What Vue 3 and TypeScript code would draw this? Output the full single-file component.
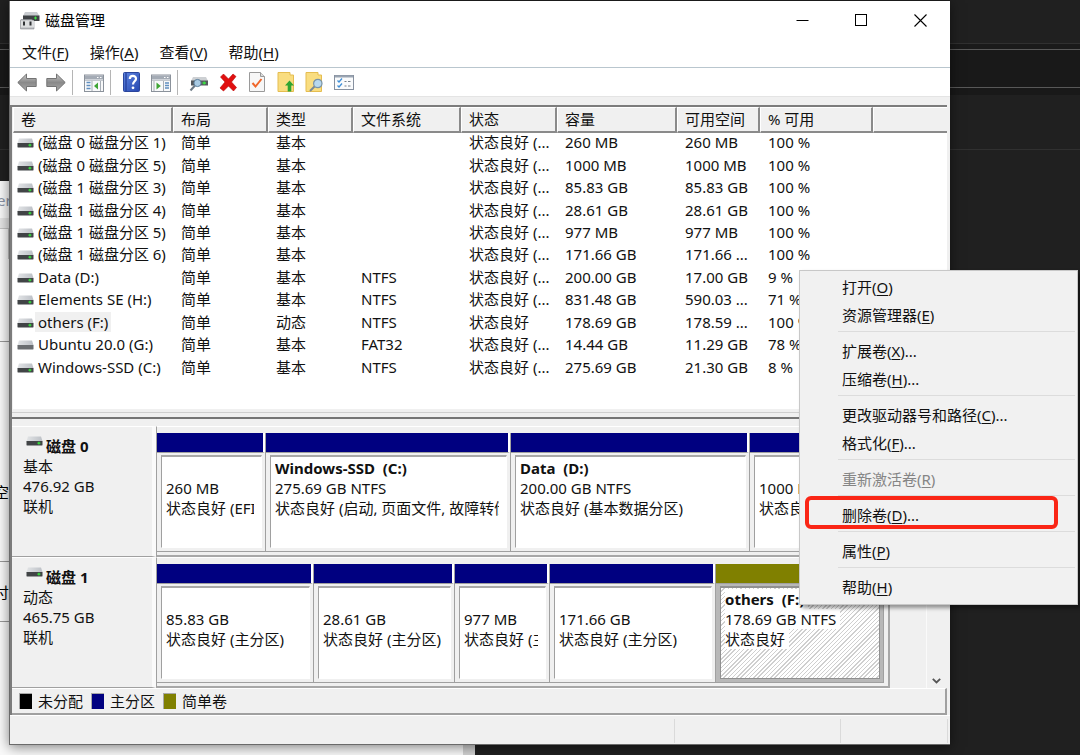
<script setup lang="ts">
interface Volume {
  name: string
  type: string
  fs: string
  status: string
  size: string
  free: string
  pct: string
  selected?: boolean
  plain?: boolean
}

interface Partition {
  title?: string
  size: string
  status: string
  weight: number
  simple?: boolean
}

interface Disk {
  name: string
  kind: string
  size: string
  partitions: Partition[]
}

interface MenuEntry {
  label?: string
  key?: string
  tail?: string
  disabled?: boolean
  marked?: boolean
}

const menus = [
  { label: '文件', key: 'F' },
  { label: '操作', key: 'A' },
  { label: '查看', key: 'V' },
  { label: '帮助', key: 'H' },
]

const columns = ['卷', '布局', '类型', '文件系统', '状态', '容量', '可用空间', '% 可用', '']

const good = '状态良好 (...'

const volumes: Volume[] = [
  { name: '(磁盘 0 磁盘分区 1)', type: '基本', fs: '', status: good, size: '260 MB', free: '260 MB', pct: '100 %' },
  { name: '(磁盘 0 磁盘分区 5)', type: '基本', fs: '', status: good, size: '1000 MB', free: '1000 MB', pct: '100 %' },
  { name: '(磁盘 1 磁盘分区 3)', type: '基本', fs: '', status: good, size: '85.83 GB', free: '85.83 GB', pct: '100 %' },
  { name: '(磁盘 1 磁盘分区 4)', type: '基本', fs: '', status: good, size: '28.61 GB', free: '28.61 GB', pct: '100 %' },
  { name: '(磁盘 1 磁盘分区 5)', type: '基本', fs: '', status: good, size: '977 MB', free: '977 MB', pct: '100 %' },
  { name: '(磁盘 1 磁盘分区 6)', type: '基本', fs: '', status: good, size: '171.66 GB', free: '171.66 ...', pct: '100 %' },
  { name: 'Data (D:)', type: '基本', fs: 'NTFS', status: good, size: '200.00 GB', free: '17.00 GB', pct: '9 %' },
  { name: 'Elements SE (H:)', type: '基本', fs: 'NTFS', status: good, size: '831.48 GB', free: '590.03 ...', pct: '71 %' },
  { name: 'others (F:)', type: '动态', fs: 'NTFS', status: '状态良好', size: '178.69 GB', free: '178.59 ...', pct: '100 %', selected: true },
  { name: 'Ubuntu 20.0 (G:)', type: '基本', fs: 'FAT32', status: good, size: '14.44 GB', free: '11.29 GB', pct: '78 %', plain: true },
  { name: 'Windows-SSD (C:)', type: '基本', fs: 'NTFS', status: good, size: '275.69 GB', free: '21.30 GB', pct: '8 %' },
]

const disks: Disk[] = [
  {
    name: '磁盘 0',
    kind: '基本',
    size: '476.92 GB',
    partitions: [
      { size: '260 MB', status: '状态良好 (EFI', weight: 109 },
      { title: 'Windows-SSD\u00a0 (C:)', size: '275.69 GB NTFS', status: '状态良好 (启动, 页面文件, 故障转储', weight: 245 },
      { title: 'Data\u00a0 (D:)', size: '200.00 GB NTFS', status: '状态良好 (基本数据分区)', weight: 239 },
      { size: '1000 MB', status: '状态良好', weight: 134 },
    ],
  },
  {
    name: '磁盘 1',
    kind: '动态',
    size: '465.75 GB',
    partitions: [
      { size: '85.83 GB', status: '状态良好 (主分区)', weight: 157 },
      { size: '28.61 GB', status: '状态良好 (主分区)', weight: 141 },
      { size: '977 MB', status: '状态良好 (主', weight: 95 },
      { size: '171.66 GB', status: '状态良好 (主分区)', weight: 166 },
      { title: 'others\u00a0 (F:)', size: '178.69 GB NTFS', status: '状态良好', weight: 168, simple: true },
    ],
  },
]

const tracks = (disk: Disk) => disk.partitions.map((p) => `minmax(0, ${p.weight}fr)`).join(' ')

const contextMenu: MenuEntry[] = [
  { label: '打开', key: 'O' },
  { label: '资源管理器', key: 'E' },
  {},
  { label: '扩展卷', key: 'X', tail: '...' },
  { label: '压缩卷', key: 'H', tail: '...' },
  {},
  { label: '更改驱动器号和路径', key: 'C', tail: '...' },
  { label: '格式化', key: 'F', tail: '...' },
  {},
  { label: '重新激活卷', key: 'R', disabled: true },
  {},
  { label: '删除卷', key: 'D', tail: '...', marked: true },
  {},
  { label: '属性', key: 'P' },
  {},
  { label: '帮助', key: 'H' },
]

const legend = [
  { label: '未分配', tone: 'black' },
  { label: '主分区', tone: 'navy' },
  { label: '简单卷', tone: 'olive' },
]
</script>

<template>
  <div class="desktop">
    <svg class="defs" width="0" height="0" aria-hidden="true">
      <defs>
        <linearGradient id="lid" x1="0" y1="0" x2="1" y2="0">
          <stop offset="0" stop-color="#e2e4e6" />
          <stop offset="1" stop-color="#bcc0c6" />
        </linearGradient>
        <linearGradient id="arrow" x1="0" y1="0" x2="0" y2="1">
          <stop offset="0" stop-color="#c8c8c8" />
          <stop offset="0.5" stop-color="#8a8a8a" />
          <stop offset="1" stop-color="#a8a8a8" />
        </linearGradient>
        <linearGradient id="book" x1="0" y1="0" x2="1" y2="1">
          <stop offset="0" stop-color="#5f86e0" />
          <stop offset="1" stop-color="#2546b0" />
        </linearGradient>
        <symbol id="drive" viewBox="0 0 17 10">
          <path d="M2 0.5H15L16.5 5.2H0.5Z" fill="url(#lid)" />
          <rect x="0.5" y="5" width="16" height="4.4" rx="0.4" fill="#414446" />
          <path d="M11.4 7.2H14.4M12.9 5.8V8.6" stroke="#35e13c" stroke-width="1.2" />
        </symbol>
        <symbol id="drive-plain" viewBox="0 0 17 10">
          <path d="M2 0.5H15L16.5 5.2H0.5Z" fill="url(#lid)" />
          <rect x="0.5" y="5" width="16" height="4.4" rx="0.4" fill="#6a6d70" />
        </symbol>
      </defs>
    </svg>

    <div class="backdrop" aria-hidden="true">
      <div class="dark-band"></div>
      <div class="sheet">
        <span class="scrap ers">ers</span>
        <span class="sheet-field"></span>
        <span class="sheet-line l1"></span>
        <span class="scrap kong">空</span>
        <span class="sheet-line l2"></span>
        <span class="scrap fu">付</span>
        <span class="sheet-line l3"></span>
      </div>
    </div>

    <main class="window">
      <header class="titlebar">
        <svg class="app-icon" viewBox="0 0 20 19" width="20" height="19" aria-hidden="true">
          <path d="M5 1H17L19.5 5H3Z" fill="#c9ccd0" />
          <rect x="3" y="4.5" width="16.5" height="5.5" fill="#3f4245" />
          <path d="M14 7H17M15.5 5.6V8.4" stroke="#3fe046" stroke-width="1.2" />
          <path d="M1 8.5H11.5L14 10V18H0.5V9Z" fill="#b4b6ba" stroke="#8c8f93" stroke-width="0.6" />
          <rect x="1" y="9.5" width="13" height="7" fill="#dcdee0" />
          <path d="M4 10.5V14.5M10.5 10.5V14.5" stroke="#303336" stroke-width="2" />
        </svg>
        <h1>磁盘管理</h1>
        <div class="controls">
          <button type="button" aria-label="最小化">
            <svg viewBox="0 0 13 13" width="13" height="13"><path d="M0.5 6.5H12.5" stroke="#000" /></svg>
          </button>
          <button type="button" aria-label="最大化">
            <svg viewBox="0 0 13 13" width="13" height="13"><rect x="0.5" y="0.5" width="11" height="11" fill="none" stroke="#000" /></svg>
          </button>
          <button type="button" aria-label="关闭">
            <svg viewBox="0 0 13 13" width="13" height="13"><path d="M0.5 0.5L12.5 12.5M12.5 0.5L0.5 12.5" stroke="#000" stroke-width="1.1" /></svg>
          </button>
        </div>
      </header>

      <nav class="menubar">
        <button v-for="m in menus" :key="m.key" type="button">{{ m.label }}(<u>{{ m.key }}</u>)</button>
      </nav>

      <div class="toolbar">
        <button type="button" aria-label="后退">
          <svg viewBox="0 0 20 19" width="20" height="19"><path d="M0.8 9.5L9.5 1V5.5H19.2V13.5H9.5V18Z" fill="url(#arrow)" stroke="#747474" /></svg>
        </button>
        <button type="button" aria-label="前进">
          <svg viewBox="0 0 20 19" width="20" height="19"><path d="M19.2 9.5L10.5 1V5.5H0.8V13.5H10.5V18Z" fill="url(#arrow)" stroke="#747474" /></svg>
        </button>
        <span class="sep"></span>
        <button type="button" aria-label="显示控制台树">
          <svg viewBox="0 0 20 19" width="20" height="19">
            <rect x="0.5" y="2" width="19" height="16.5" fill="#f8f9fa" stroke="#8b929b" />
            <rect x="1" y="2.5" width="18" height="4" fill="#a4abb5" />
            <path d="M13 4.5H14.5M16 4.5H17.5" stroke="#fff" />
            <path d="M1 7.5H19" stroke="#c3c8ce" />
            <path d="M2.5 9.5H6.5M2.5 12.5H6.5M2.5 15.5H6.5" stroke="#5f8fc0" stroke-width="1.4" />
            <path d="M8 8V18M16.5 8V18" stroke="#a7aeb6" />
            <path d="M14 9.5V16.5L10 13Z" fill="#3fa535" />
          </svg>
        </button>
        <span class="sep"></span>
        <button type="button" aria-label="帮助">
          <svg viewBox="0 0 17 20" width="17" height="20">
            <rect x="0.5" y="0.5" width="16" height="19" rx="1" fill="url(#book)" stroke="#2a459c" />
            <path d="M3 1V19" stroke="#2743a0" stroke-width="1.4" />
            <path d="M6.8 7C6.8 2.8 13 3 13 6.7C13 9.3 10 9.4 10 12.5" fill="none" stroke="#fff" stroke-width="2.2" />
            <circle cx="10" cy="15.8" r="1.4" fill="#fff" />
          </svg>
        </button>
        <button type="button" aria-label="显示操作窗格">
          <svg viewBox="0 0 20 19" width="20" height="19">
            <rect x="0.5" y="2" width="19" height="16.5" fill="#f8f9fa" stroke="#8b929b" />
            <rect x="1" y="2.5" width="18" height="4" fill="#a4abb5" />
            <path d="M13 4.5H14.5M16 4.5H17.5" stroke="#fff" />
            <path d="M1 7.5H19" stroke="#c3c8ce" />
            <path d="M14 10H18M14 12.5H18M14 15H18" stroke="#5f8fc0" stroke-width="1.3" />
            <path d="M3 8V18M12.5 8V18" stroke="#a7aeb6" />
            <path d="M5.5 9.5V16.5L9.8 13Z" fill="#3fa535" />
          </svg>
        </button>
        <span class="sep"></span>
        <button type="button" aria-label="重新扫描磁盘">
          <svg viewBox="0 0 20 19" width="20" height="19">
            <path d="M4 4H17L19 8H2Z" fill="#cdd0d3" />
            <rect x="2" y="7.5" width="17" height="5" fill="#55595d" />
            <path d="M13.5 10H17M15.2 8.4V11.6" stroke="#3be143" stroke-width="1.4" />
            <path d="M1.5 17.5L6 12.5" stroke="#6d7a86" stroke-width="2" />
            <circle cx="8.5" cy="10" r="3.6" fill="#a9cbe4" stroke="#5c7f9c" />
          </svg>
        </button>
        <button type="button" aria-label="删除">
          <svg viewBox="0 0 20 19" width="20" height="19"><path d="M2.500 4L5.500 1L10.500 6L15 1L18 3.500L13.500 9L18.500 14.500L15.500 18L10.500 13L5.500 18L2 15L7 9Z" fill="#e11010" stroke="#b80808" stroke-width="0.6" /></svg>
        </button>
        <button type="button" aria-label="属性">
          <svg viewBox="0 0 16 20" width="16" height="20">
            <path d="M0.5 0.5H11.5L15.5 4.5V19.5H0.5Z" fill="#f7f7f7" stroke="#9a9a9a" />
            <path d="M11.5 0.5V4.5H15.5" fill="#dcdcdc" stroke="#9a9a9a" />
            <path d="M3.5 11L6.5 14.5L12.5 7" fill="none" stroke="#f0662a" stroke-width="2" />
          </svg>
        </button>
        <button type="button" aria-label="上移">
          <svg viewBox="0 0 18 20" width="18" height="20">
            <path d="M1 0.5H13V3H16.5V19.5H1Z" fill="#f9dd80" stroke="#e5bd50" />
            <path d="M12.5 8.5L17 13.5H14.3V19.5H10.7V13.5H8Z" fill="#2fa531" />
          </svg>
        </button>
        <button type="button" aria-label="查找">
          <svg viewBox="0 0 19 20" width="19" height="20">
            <path d="M1 0.5H13V3H16.5V19.5H1Z" fill="#f9dd80" stroke="#e5bd50" />
            <path d="M5 19L10 14" stroke="#7b8994" stroke-width="2" />
            <circle cx="12.8" cy="11.5" r="4.2" fill="#b7d8ee" stroke="#7893a8" stroke-width="1.2" />
          </svg>
        </button>
        <button type="button" aria-label="列表">
          <svg viewBox="0 0 20 19" width="20" height="19">
            <rect x="0.5" y="2.5" width="19" height="14" fill="#fafbfc" stroke="#8791a0" />
            <path d="M1 3.5H19" stroke="#9aa4b2" stroke-width="2" />
            <path d="M3.5 7.5L5 9L8 5.5M3.5 12.5L5 14L8 10.5" fill="none" stroke="#3f8fd8" stroke-width="1.3" />
            <path d="M10.5 8.5H12.5M14 8.5H16.5M10.5 13H12.5M14 13H16.5" stroke="#77808c" stroke-width="1.2" />
          </svg>
        </button>
      </div>

      <section class="panes">
        <div class="volume-pane">
          <table>
            <colgroup>
              <col v-for="(c, i) in columns" :key="i" :class="'c' + i" />
            </colgroup>
            <thead>
              <tr>
                <th v-for="(c, i) in columns" :key="i" scope="col">{{ c }}</th>
              </tr>
            </thead>
            <tbody>
              <tr v-for="v in volumes" :key="v.name">
                <td class="name">
                  <svg width="17" height="10" aria-hidden="true"><use :href="v.plain ? '#drive-plain' : '#drive'" /></svg>
                  <span :class="{ selected: v.selected }">{{ v.name }}</span>
                </td>
                <td>简单</td>
                <td>{{ v.type }}</td>
                <td>{{ v.fs }}</td>
                <td>{{ v.status }}</td>
                <td>{{ v.size }}</td>
                <td>{{ v.free }}</td>
                <td>{{ v.pct }}</td>
                <td></td>
              </tr>
            </tbody>
          </table>
        </div>

        <div class="splitter"></div>

        <div class="disk-pane">
          <div class="disk-list">
            <article v-for="d in disks" :key="d.name" class="disk">
              <div class="disk-label">
                <h2><svg width="17" height="10" aria-hidden="true"><use href="#drive" /></svg>{{ d.name }}</h2>
                <p>{{ d.kind }}</p>
                <p>{{ d.size }}</p>
                <p>联机</p>
              </div>
              <div class="disk-frame">
                <div class="partitions" :style="{ gridTemplateColumns: tracks(d) }">
                  <div v-for="(p, i) in d.partitions" :key="i" class="partition" :class="{ simple: p.simple }">
                    <div class="bar"></div>
                    <div class="body">
                      <div class="box">
                        <p><b>{{ p.title }}</b></p>
                        <p><span>{{ p.size }}</span></p>
                        <p><span>{{ p.status }}</span></p>
                      </div>
                    </div>
                  </div>
                </div>
              </div>
            </article>
          </div>
          <div class="scrollbar">
            <button type="button" aria-label="向下滚动">
              <svg viewBox="0 0 9 6" width="9" height="6"><path d="M0.8 0.8L4.5 4.5L8.2 0.8" fill="none" stroke="#555" stroke-width="1.8" /></svg>
            </button>
          </div>
        </div>

        <div class="legend">
          <span v-for="l in legend" :key="l.tone" class="legend-item"><i :class="l.tone"></i>{{ l.label }}</span>
        </div>
      </section>

      <footer class="status"><span></span><span></span><span></span></footer>
    </main>

    <div class="context" role="menu">
      <template v-for="(e, i) in contextMenu" :key="i">
        <button v-if="e.label" type="button" role="menuitem" :disabled="e.disabled" :class="{ marked: e.marked }">{{ e.label }}(<u>{{ e.key }}</u>){{ e.tail }}</button>
        <div v-else class="rule" role="separator"></div>
      </template>
    </div>
  </div>
</template>

<style>
body {
  margin: 0;
}
</style>

<style scoped>
* {
  box-sizing: border-box;
}

.desktop {
  position: relative;
  min-height: 100vh;
  overflow: hidden;
  background: #202020;
  color: #111;
  font: 15px/20px "Noto Sans", "Noto Sans CJK SC", sans-serif;
}

.defs {
  position: absolute;
}

h1,
h2,
p {
  margin: 0;
  font-size: 15px;
  font-weight: 400;
}

button {
  margin: 0;
  padding: 0;
  border: 0;
  background: none;
  color: inherit;
  font: inherit;
}

u {
  text-underline-offset: 2px;
  text-decoration-thickness: 1px;
}

/* Windows lying behind the main one */
.backdrop {
  position: absolute;
  inset: 0;
}

.dark-band {
  margin-top: 43px;
  height: 107px;
  border-top: 1px solid #303030;
  border-bottom: 1px solid #303030;
  background: linear-gradient(#1a1a1a 5px, #585858 5px, #585858 6px, #191919 6px, #191919 43px, #585858 43px, #585858 44px, #191919 44px, #191919 51px, #202020 51px);
}

.sheet {
  position: absolute;
  top: 181px;
  left: 0;
  bottom: 0;
  width: 475px;
  border-right: 12px solid #d2d2d2;
  background: linear-gradient(#fafafa 37px, #e6e6e6 37px, #e6e6e6 47px, #fafafa 47px);
}

.scrap {
  position: absolute;
  left: -6px;
  width: 16px;
  color: #000;
  white-space: nowrap;
}

.ers {
  top: 9px;
  left: -3px;
  color: #8b93a6;
}

.kong {
  top: 301px;
}

.fu {
  top: 401px;
}

.sheet-field {
  position: absolute;
  top: 47px;
  left: 0;
  width: 9px;
  height: 31px;
  border: solid #c4c4c4;
  border-width: 1px 1px 0 0;
}

.sheet-line {
  position: absolute;
  left: 0;
  width: 10px;
  height: 1px;
  background: #999;
}

.l1 {
  top: 160px;
}

.l2 {
  top: 380px;
}

.l3 {
  top: 440px;
}

.window {
  position: absolute;
  top: 1px;
  right: 130px;
  bottom: 10px;
  left: 9px;
  display: flex;
  flex-direction: column;
  border-left: 1px solid #6a6a6a;
  border-bottom: 1px solid #6a6a6a;
  background: #f0f0f0;
  box-shadow: 0 2px 12px rgba(0, 0, 0, 0.5);
}

.titlebar {
  display: flex;
  align-items: center;
  height: 38px;
  padding-left: 10px;
  background: #fff;
}

.titlebar h1 {
  flex: 1;
  margin-left: 5px;
  padding-bottom: 1px;
  color: #000;
}

.controls {
  display: flex;
}

.controls button {
  display: grid;
  place-items: center;
  width: 59px;
  height: 38px;
}

.menubar {
  display: flex;
  height: 29px;
  padding-left: 2px;
  border-bottom: 1px solid #b9c6ce;
  background: #fff;
}

.menubar button {
  padding: 0 11px 2px 10px;
}

.toolbar {
  display: flex;
  align-items: center;
  height: 29px;
  padding-left: 2px;
  border-bottom: 1px solid #e4e4e4;
  background: #fff;
}

.toolbar button {
  display: grid;
  place-items: center;
  width: 29px;
  height: 28px;
}

.sep {
  width: 9px;
  height: 25px;
  background: linear-gradient(90deg, transparent 2px, #b5b5b5 2px, #b5b5b5 3px, transparent 3px);
}

.panes {
  flex: 1;
  display: flex;
  flex-direction: column;
  min-height: 0;
  margin: 8px 3px 0 0;
  border: solid #7c7c7c;
  border-width: 2px 0 0 2px;
}

.volume-pane {
  flex: 1;
  min-height: 0;
  margin-left: 1px;
  background: #fff;
}

table {
  width: 100%;
  height: 273px;
  border-collapse: separate;
  border-spacing: 0;
  table-layout: fixed;
}

.c0 { width: 160px; }
.c1 { width: 95px; }
.c2 { width: 85px; }
.c3 { width: 108px; }
.c4 { width: 96px; }
.c5 { width: 120px; }
.c6 { width: 83px; }
.c7 { width: 113px; }

th {
  height: 26px;
  padding: 0 0 2px 7px;
  border: solid;
  border-width: 1px 2px 2px 1px;
  border-color: #fff #8a8a8a #8a8a8a #fff;
  background: #f0f0f0;
  font-weight: 400;
  text-align: left;
  white-space: nowrap;
}

th:last-child {
  border-right: 0;
}

td {
  padding: 0 0 4px 8px;
  line-height: 18px;
  white-space: nowrap;
}

.name svg {
  margin-left: -4px;
}

.name span {
  margin-left: 1px;
  padding: 0 3px;
}

.name .selected {
  background: #f0f0f0;
}

.splitter {
  height: 10px;
  border-bottom: 2px solid #757575;
  background: linear-gradient(#f0f0f0 3px, #cfcfcf 3px, #cfcfcf 4px, #f0f0f0 4px);
}

.disk-pane {
  display: flex;
  padding-top: 7px;
}

.disk-list {
  flex: 1;
  min-width: 0;
}

.disk {
  display: flex;
  height: 131px;
  padding-right: 36px;
}

.disk-label {
  width: 144px;
  padding: 9px 0 0 11px;
  border-top: 1px solid #fff;
  border-right: 4px solid #fafafa;
  border-bottom: 1px solid #a0a0a0;
}

.disk-label h2 {
  display: flex;
  padding-left: 3px;
  font-weight: 700;
}

.disk-label h2 svg {
  margin-right: 3px;
}

.disk-frame {
  flex: 1;
  min-width: 0;
  padding: 6px 4px 3px 0;
  border: solid;
  border-width: 1px 2px 2px 1px;
  border-color: #fff #a8a8a8 #a8a8a8 #a0a0a0;
}

.partitions {
  display: grid;
  height: 100%;
}

.partition {
  display: flex;
  flex-direction: column;
  border-right: 1px solid #a0a0a0;
  border-bottom: 1px solid #a0a0a0;
}

.bar {
  height: 20px;
  border: solid;
  border-width: 0 2px 1px 0;
  border-color: #fff #fff #a0a0a0 #a0a0a0;
  background: #000080;
}

.body {
  flex: 1;
  min-height: 0;
  padding: 2px 3px 3px 4px;
}

.box {
  height: 100%;
  padding: 1px 7px 0 4px;
  border: solid;
  border-width: 2px 1px 1px 1px;
  border-color: #a8a8a8 #fff #fff #a0a0a0;
  background: #fff;
}

.box p {
  height: 20px;
  overflow: hidden;
  white-space: nowrap;
}

.simple .bar {
  background: #808000;
}

.simple .body {
  background: #b8b8b8;
}

.simple .box {
  border-color: #909090;
  background: repeating-linear-gradient(135deg, #fff 0, #fff 2px, #cfcfcf 2px, #cfcfcf 3px);
}

.simple .box b,
.simple .box span {
  padding-right: 4px;
  background: #fff;
}

.scrollbar {
  display: flex;
  flex-direction: column;
  justify-content: flex-end;
  width: 21px;
  border-left: 1px solid #fafafa;
}

.scrollbar button {
  height: 20px;
  padding-right: 2px;
}

.legend {
  display: flex;
  height: 27px;
  gap: 8px;
  padding-left: 7px;
  border: solid;
  border-width: 1px 2px 2px 0;
  border-color: #fff #a0a0a0 #a0a0a0;
}

.legend-item {
  display: flex;
  align-items: center;
}

.legend-item i {
  width: 13px;
  height: 16px;
  margin-right: 6px;
  border: 1px solid #a8a8a8;
  border-width: 1px 0 0 1px;
}

.black { background: #000; }
.navy { background: #000080; }
.olive { background: #808000; }

.status {
  display: flex;
  height: 29px;
  padding: 3px 2px 1px 0;
  border-top: 1px solid #fff;
}

.status span {
  width: 166px;
  border-right: 1px solid #dadada;
}

.status span:first-child {
  flex: 1;
}

.status span:last-child {
  width: 107px;
}

.context {
  position: absolute;
  top: 270px;
  left: 799px;
  width: 279px;
  padding: 2px 2px 3px;
  border: 1px solid #c8c8c8;
  background: #f1f1f1;
  box-shadow: 3px 3px 4px rgba(0, 0, 0, 0.4);
}

.context button {
  position: relative;
  display: block;
  width: 100%;
  height: 28px;
  padding: 0 0 1px 40px;
  text-align: left;
}

.context button:disabled {
  color: #858585;
}

.rule {
  height: 8px;
  margin-left: 36px;
  background: linear-gradient(transparent 2px, #dcdcdc 2px, #dcdcdc 3px, transparent 3px);
}

.marked::after {
  content: "";
  position: absolute;
  inset: -5px 17px 0 3px;
  border: 4px solid #fa2616;
  border-radius: 6px;
}
</style>
